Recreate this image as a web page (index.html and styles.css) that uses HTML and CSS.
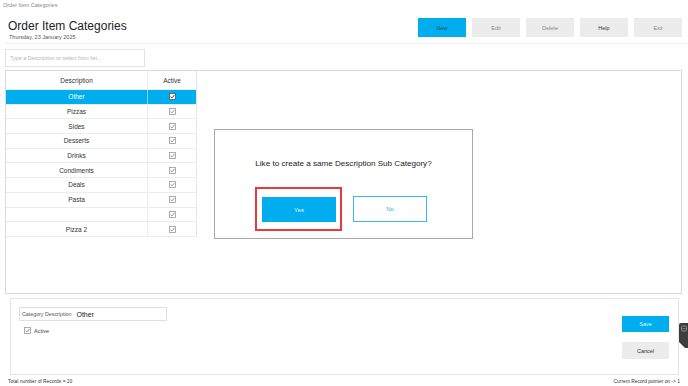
FILE: index.html
```html
<!DOCTYPE html>
<html>
<head>
<meta charset="utf-8">
<link rel="stylesheet" href="styles.css">
</head>
<body>
<div class="page">
  <div class="apptitle">Order Item Categories</div>
  <div class="header">
    <div class="titles">
      <div class="title">Order Item Categories</div>
      <div class="date">Thursday, 23 January 2025</div>
    </div>
    <div class="toolbar">
      <div class="tbtn primary">New</div>
      <div class="tbtn muted">Edit</div>
      <div class="tbtn muted">Delete</div>
      <div class="tbtn">Help</div>
      <div class="tbtn muted">Exit</div>
    </div>
  </div>
  <div class="search">Type a Description or select from list...</div>
  <div class="main">
    <div class="grid">
      <div class="row head"><div class="cell">Description</div><div class="cell">Active</div></div>
      <div class="row sel"><div class="cell">Other</div><div class="cell"><svg class="cb" viewBox="0 0 7 7"><rect x="0.5" y="0.5" width="6" height="6"/><path d="M1.6 3.5 L3 4.9 L5.5 1.9"/></svg></div></div>
      <div class="row"><div class="cell">Pizzas</div><div class="cell"><svg class="cb" viewBox="0 0 7 7"><rect x="0.5" y="0.5" width="6" height="6"/><path d="M1.6 3.5 L3 4.9 L5.5 1.9"/></svg></div></div>
      <div class="row"><div class="cell">Sides</div><div class="cell"><svg class="cb" viewBox="0 0 7 7"><rect x="0.5" y="0.5" width="6" height="6"/><path d="M1.6 3.5 L3 4.9 L5.5 1.9"/></svg></div></div>
      <div class="row"><div class="cell">Desserts</div><div class="cell"><svg class="cb" viewBox="0 0 7 7"><rect x="0.5" y="0.5" width="6" height="6"/><path d="M1.6 3.5 L3 4.9 L5.5 1.9"/></svg></div></div>
      <div class="row"><div class="cell">Drinks</div><div class="cell"><svg class="cb" viewBox="0 0 7 7"><rect x="0.5" y="0.5" width="6" height="6"/><path d="M1.6 3.5 L3 4.9 L5.5 1.9"/></svg></div></div>
      <div class="row"><div class="cell">Condiments</div><div class="cell"><svg class="cb" viewBox="0 0 7 7"><rect x="0.5" y="0.5" width="6" height="6"/><path d="M1.6 3.5 L3 4.9 L5.5 1.9"/></svg></div></div>
      <div class="row"><div class="cell">Deals</div><div class="cell"><svg class="cb" viewBox="0 0 7 7"><rect x="0.5" y="0.5" width="6" height="6"/><path d="M1.6 3.5 L3 4.9 L5.5 1.9"/></svg></div></div>
      <div class="row"><div class="cell">Pasta</div><div class="cell"><svg class="cb" viewBox="0 0 7 7"><rect x="0.5" y="0.5" width="6" height="6"/><path d="M1.6 3.5 L3 4.9 L5.5 1.9"/></svg></div></div>
      <div class="row"><div class="cell"></div><div class="cell"><svg class="cb" viewBox="0 0 7 7"><rect x="0.5" y="0.5" width="6" height="6"/><path d="M1.6 3.5 L3 4.9 L5.5 1.9"/></svg></div></div>
      <div class="row"><div class="cell">Pizza 2</div><div class="cell"><svg class="cb" viewBox="0 0 7 7"><rect x="0.5" y="0.5" width="6" height="6"/><path d="M1.6 3.5 L3 4.9 L5.5 1.9"/></svg></div></div>
    </div>
    <div class="dialog">
      <div class="dlg-text">Like to create a same Description Sub Category?</div>
      <div class="dlg-actions">
        <div class="highlight"><div class="dbtn yes">Yes</div></div>
        <div class="dbtn no">No</div>
      </div>
    </div>
  </div>
  <div class="editor">
    <div class="fields">
      <div class="field"><span class="flabel">Category Description</span><span class="fvalue">Other</span></div>
      <div class="check"><svg class="cb" viewBox="0 0 7 7"><rect x="0.5" y="0.5" width="6" height="6"/><path d="M1.6 3.5 L3 4.9 L5.5 1.9"/></svg><span class="clabel">Active</span></div>
    </div>
    <div class="actions">
      <div class="abtn save">Save</div>
      <div class="abtn cancel">Cancel</div>
    </div>
  </div>
  <div class="footer">
    <span>Total number of Records = 10</span>
    <span>Current Record pointer on -&gt; 1</span>
  </div>
  <div class="sidetab">
    <svg width="9" height="25" viewBox="0 0 9 25"><path d="M2 0 H9 V25 H6 L0 19 V2 Q0 0 2 0 Z" fill="#3d3d3d"/><rect x="2.5" y="3" width="5" height="5" rx="1.2" fill="none" stroke="#9a9a9a" stroke-width="0.9"/><path d="M3.5 5.5 H6.5" stroke="#9a9a9a" stroke-width="0.7"/></svg>
  </div>
</div>
</body>
</html>
```
FILE: styles.css
```css
* { box-sizing: border-box; }
html, body { margin: 0; padding: 0; background: #fff; }
body { font-family: "Liberation Sans", Arial, sans-serif; color: #333; }
.page { position: relative; width: 688px; height: 386px; overflow: hidden; display: flex; flex-direction: column; }

.apptitle { height: 11px; line-height: 11px; font-size: 5.5px; color: #888; padding-left: 3px; }

.header { height: 33px; margin-left: 5px; border-bottom: 1px solid #eeeeee; display: flex; justify-content: space-between; }
.titles { padding-left: 3px; padding-top: 8px; }
.title { font-size: 12px; line-height: 14px; color: #222; }
.date { font-size: 5.5px; line-height: 7px; color: #555; margin-top: 1px; padding-left: 1px; }
.toolbar { display: flex; gap: 6px; padding-top: 7px; padding-right: 6px; }
.tbtn { width: 48px; height: 19px; background: #ececec; font-size: 5.5px; color: #333; display: flex; align-items: center; justify-content: center; }
.tbtn.primary { background: #00aeef; color: #1a4b66; }
.tbtn.muted { color: #888; }

.search { margin: 5px 0 0 5px; width: 140px; height: 18px; border: 1px solid #e2e2e2; font-size: 5.4px; color: #b5b5b5; padding-left: 4px; display: flex; align-items: center; }

.main { position: relative; margin: 3px 0 0 5px; width: 677px; height: 224px; border: 1px solid #dadada; }
.grid { width: 191px; border-right: 1px solid #e6e6e6; }
.row { display: grid; grid-template-columns: 142px 48px; height: 14.7px; border-bottom: 1px solid #ececec; }
.row.head { height: 19px; }
.cell { display: flex; align-items: center; justify-content: center; font-size: 6.5px; color: #333; border-right: 1px solid #ececec; }
.cell:last-child { border-right: none; }
.row.sel { background: #00aeef; }
.row.sel .cell { color: #fff; border-right-color: #7fd4f5; }
.cb { display: block; width: 7px; height: 7px; }
.cb rect { fill: #fff; stroke: #9a9a9a; stroke-width: 0.8; }
.cb path { fill: none; stroke: #8a8a8a; stroke-width: 0.9; }
.row.sel .cb rect { stroke: #555; }
.row.sel .cb path { stroke: #333; }

.dialog { position: absolute; left: 208px; top: 58px; width: 259px; height: 110px; background: #fff; border: 1px solid #a9a9a9; display: flex; flex-direction: column; }
.dlg-text { font-size: 8.1px; color: #222; text-align: center; margin-top: 29px; line-height: 10px; }
.dlg-actions { display: flex; align-items: center; gap: 11px; padding-left: 40px; margin-top: 18px; }
.highlight { border: 2px solid #ea3a3a; padding: 8px 4px 7px 5px; }
.dbtn { width: 74px; height: 26px; display: flex; align-items: center; justify-content: center; font-size: 6px; }
.dbtn.yes { background: #00aeef; color: #e8f7ff; height: 25px; }
.dbtn.no { width: 74px; background: #fff; border: 1.5px solid #3ab9ee; color: #3aa8de; }

.editor { margin: 4px 0 0 10px; width: 669px; height: 77px; border: 1px solid #e4e4e4; display: flex; justify-content: space-between; padding: 8px 9px 0 8px; }
.field { width: 148px; height: 14px; border: 1px solid #e0e0e0; display: flex; align-items: center; padding-left: 2px; }
.flabel { font-size: 5.3px; color: #555; }
.fvalue { font-size: 7px; color: #222; margin-left: 5px; }
.check { display: flex; align-items: center; margin-top: 6px; padding-left: 5px; }
.clabel { font-size: 5.5px; color: #444; margin-left: 3px; }
.actions { display: flex; flex-direction: column; gap: 10px; padding-top: 9px; }
.abtn { width: 47px; height: 16px; display: flex; align-items: center; justify-content: center; font-size: 5.5px; }
.abtn.save { background: #00aeef; color: #dff4ff; }
.abtn.cancel { background: #ececec; color: #333; height: 17px; }

.footer { display: flex; justify-content: space-between; padding: 0 8px 0 8px; margin-top: 3px; font-size: 4.9px; color: #333; line-height: 8px; }

.sidetab { position: absolute; right: 0; top: 323px; width: 9px; height: 25px; line-height: 0; }
```
